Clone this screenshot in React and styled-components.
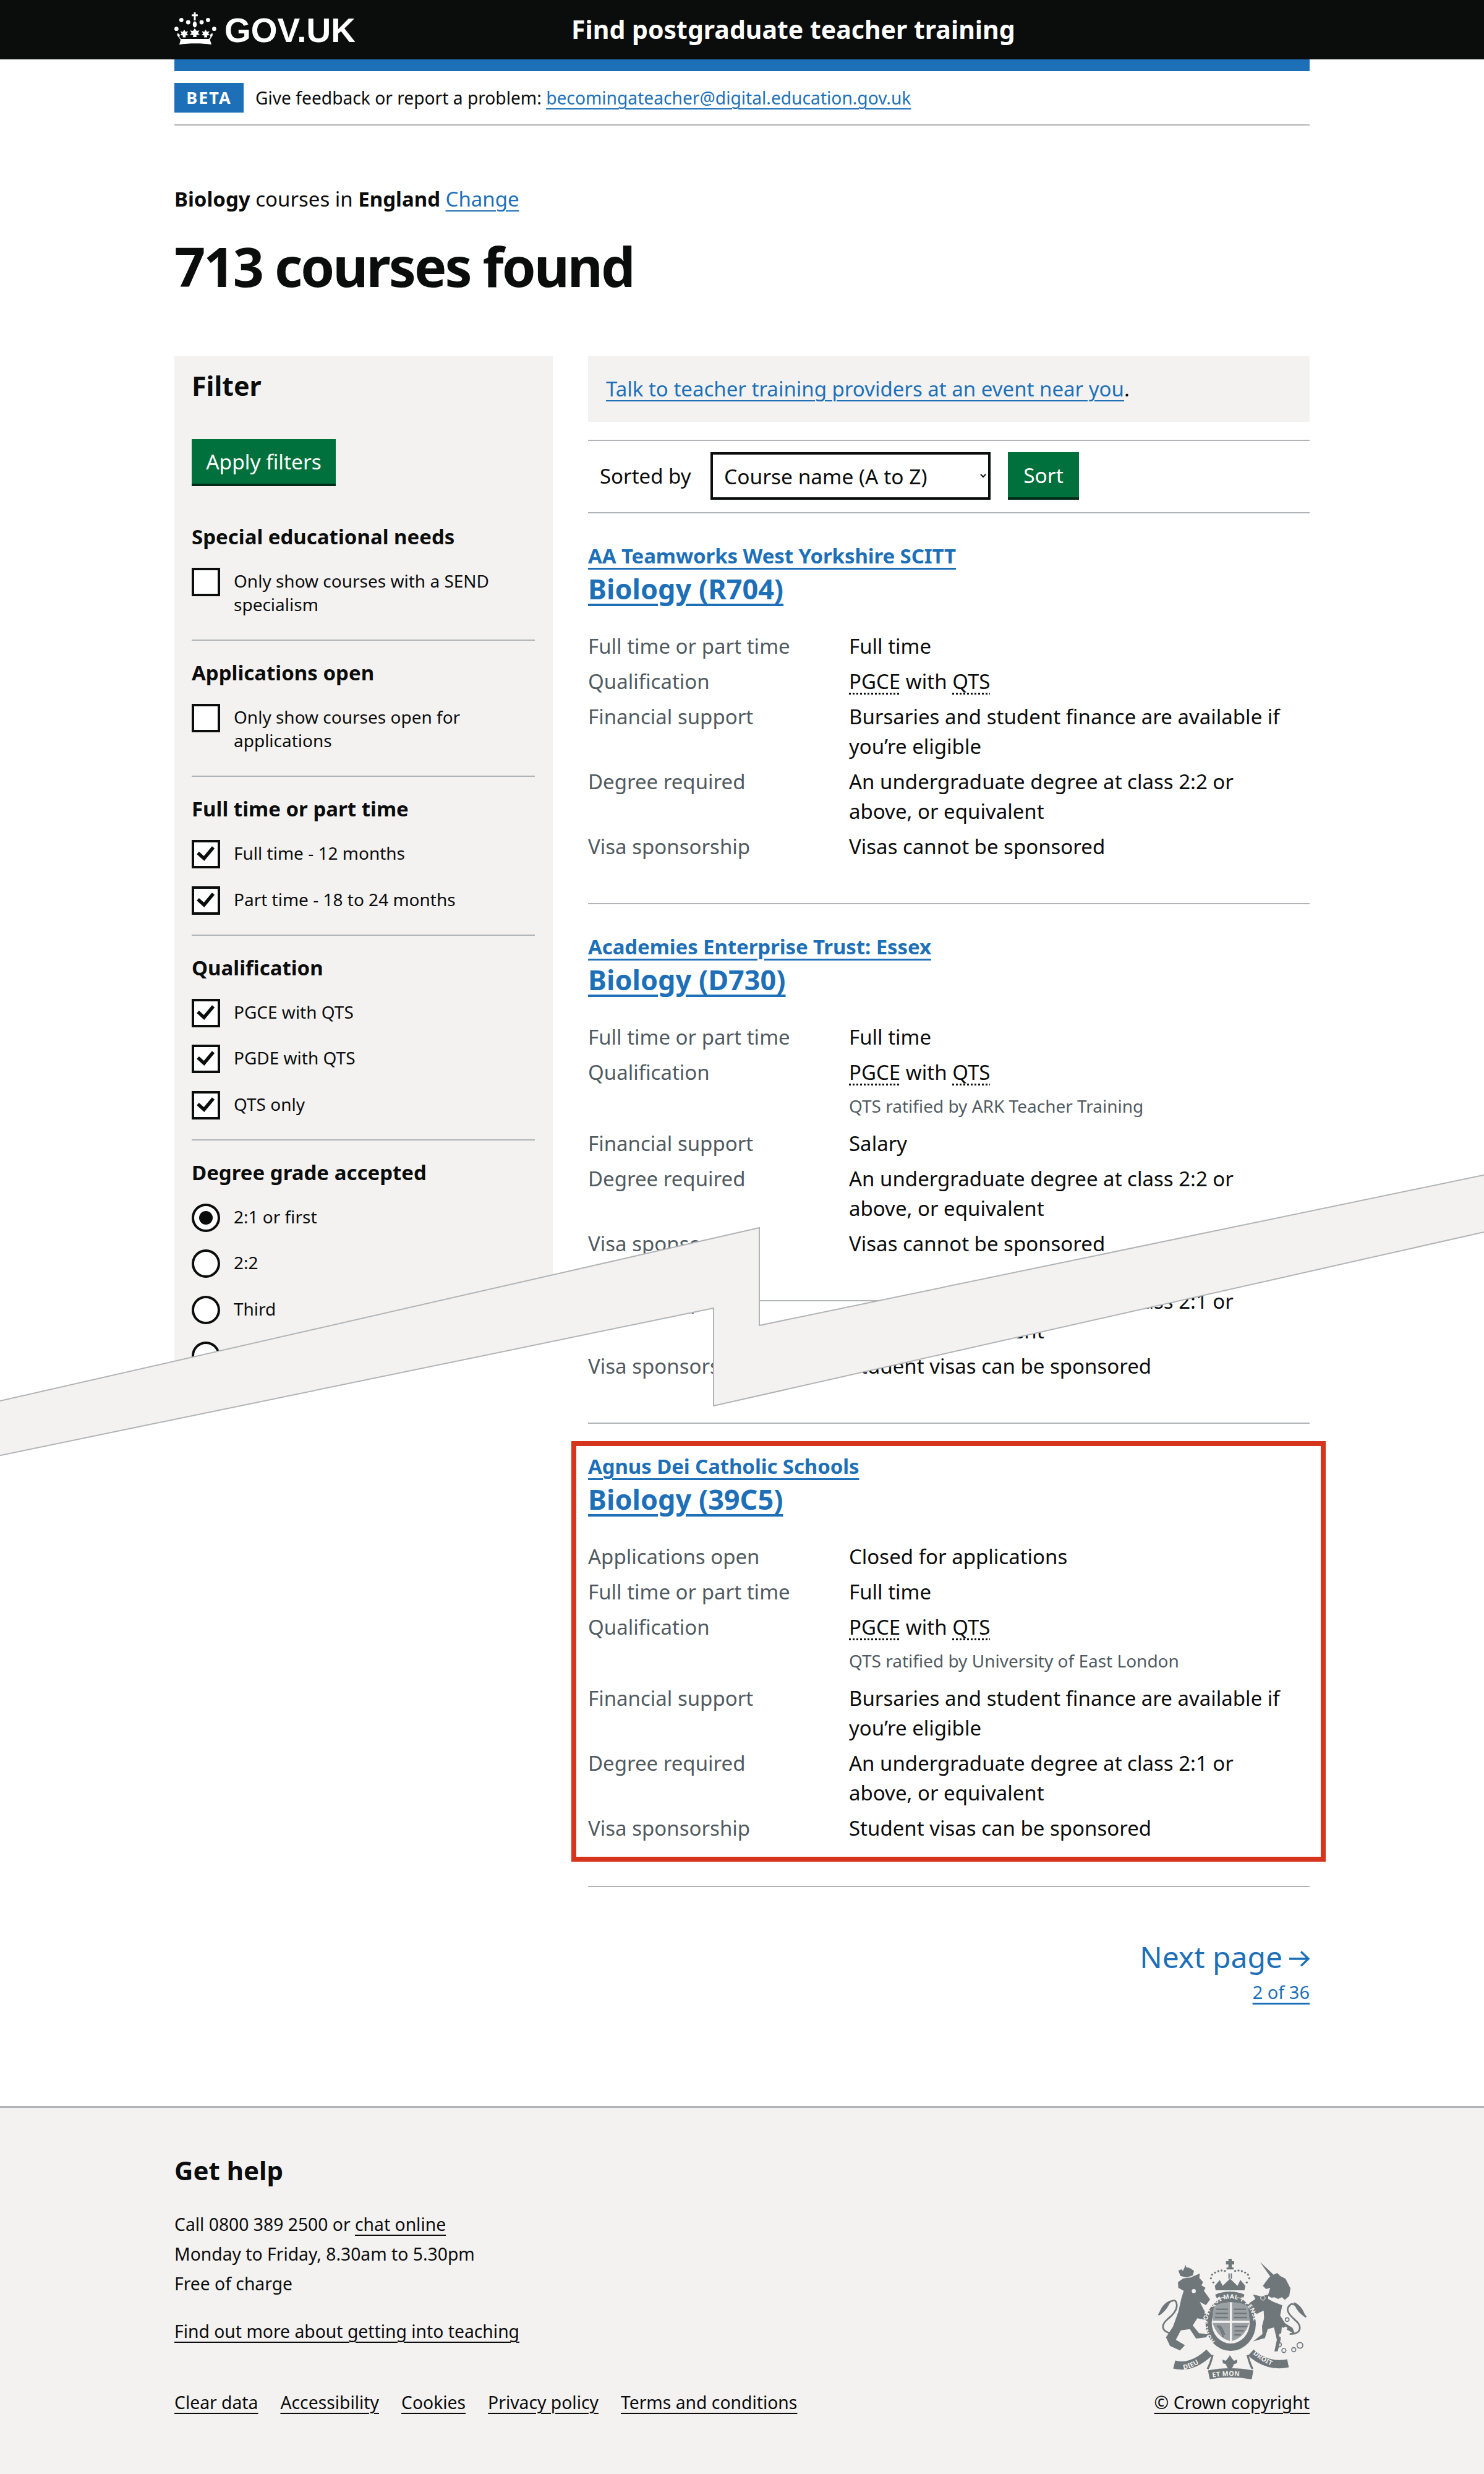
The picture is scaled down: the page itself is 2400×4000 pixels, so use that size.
import React from 'react';
import styled, { createGlobalStyle } from 'styled-components';

const Global = createGlobalStyle`
  * { box-sizing: border-box; }
  html, body { margin: 0; padding: 0; background: #fff; }
  body { font-family: "Noto Sans", Arial, sans-serif; color: #0b0c0c; font-size: 33px; line-height: 48px; }
`;

const Page = styled.div`position: relative; width: 2400px; height: 4000px; overflow: hidden; background: #fff;`;
const TopSheet = styled.div`
  position: relative; z-index: 1; background: #fff;
  clip-path: polygon(0 0, 2400px 0, 2400px 1945px, 1190px 2210px, 1190px 2050px, 0 2310px);
`;
const Width = styled.div`width: 1836px; margin: 0 auto;`;

const HeaderBar = styled.header`background: #0b0c0c; height: 96px;`;
const HeaderInner = styled(Width)`display: flex; align-items: center; height: 96px; padding-bottom: 3px;`;
const LogoLink = styled.a`flex: 0 0 642px; display: flex; align-items: center; gap: 13px; color: #fff;`;
const LogoType = styled.span`font-family: "Liberation Sans", Arial, sans-serif; font-weight: 700; font-size: 55px; line-height: 60px; margin-top: 5px;`;
const ServiceName = styled.a`color: #fff; font-weight: 700; font-size: 41px; line-height: 60px;`;
const BlueBar = styled(Width)`height: 19px; background: #1d70b8;`;

const Phase = styled(Width)`display: flex; align-items: center; gap: 19px; padding: 19px 0; border-bottom: 2px solid #b1b4b6; height: 88px; font-size: 28.2px;`;
const Tag = styled.strong`width: 112px; height: 48px; background: #1d70b8; color: #fff; display: flex; align-items: center; justify-content: center; font-size: 27px; letter-spacing: 2px; font-weight: 700;`;
const Link = styled.a`
  color: ${p => p.$dark ? '#0b0c0c' : '#1d70b8'};
  text-decoration: underline; text-decoration-thickness: 2px; text-underline-offset: 6px;
`;

const Crumb = styled.p`margin: 95px 0 0; font-size: 33px; line-height: 48px;`;
const H1 = styled.h1`margin: 29px 0 91px; font-size: 88px; line-height: 110px; font-weight: 700; letter-spacing: -3px;`;

const Columns = styled.div`display: grid; grid-template-columns: 612px 1167px; column-gap: 57px; align-items: start;`;
const Sidebar = styled.aside`background: #f3f2f1; padding: 18px 29px 0 28px; height: 1720px; overflow: hidden;`;
const FilterTitle = styled.h2`margin: 0 0 56px; font-size: 43px; line-height: 60px; font-weight: 700;`;
const Button = styled.button`
  display: inline-flex; align-items: center; justify-content: center; border: 0; border-radius: 0;
  background: #00703c; color: #fff; box-shadow: 0 4px 0 #002d18; font-family: inherit;
  font-size: 33.5px; line-height: 48px;
  height: ${p => p.$small ? '73px' : '72px'}; padding: 0; margin-bottom: 4px;
  width: ${p => p.$small ? '115px' : '233px'};
`;
const FilterSection = styled.section`
  padding: 30px 0 32px; border-top: ${p => p.$first ? '0' : '2px solid #b1b4b6'};
  margin-top: ${p => p.$first ? '30px' : '0'};
`;
const FilterHead = styled.h3`margin: 0 0 28px; font-size: 33px; line-height: 44px; font-weight: 700;`;
const Options = styled.div`display: flex; flex-direction: column; gap: 28.5px;`;
const Option = styled.label`display: grid; grid-template-columns: 46px 1fr; column-gap: 22px; font-size: 28px; line-height: 38px;`;
const OptionText = styled.span`padding: 2px 0 6px;`;
const CheckBox = styled.span`display: block; width: 46px; height: 46px; border: 4px solid #0b0c0c; background: #fff;`;
const RadioMark = styled.span`
  display: flex; align-items: center; justify-content: center; width: 46px; height: 46px;
  border: 4px solid #0b0c0c; border-radius: 50%; background: #fff;
  &::after { content: ''; width: 22px; height: 22px; border-radius: 50%; background: ${p => p.$on ? '#0b0c0c' : 'transparent'}; }
`;

const Callout = styled.div`height: 106px; padding: 0 29px; background: #f3f2f1; display: flex; align-items: center;`;
const SortBar = styled.form`
  margin-top: 29px; padding: 18px 0 20px 19px; border-top: 2px solid #b1b4b6; border-bottom: 2px solid #b1b4b6;
  display: flex; align-items: flex-start; gap: 28px;
`;
const SortLabel = styled.label`min-width: 151px; line-height: 77px; white-space: nowrap;`;
const SortSelect = styled.select`
  width: 453px; height: 77px; border: 4px solid #0b0c0c; background: #fff; color: #0b0c0c; border-radius: 0;
  font-family: inherit; font-size: 33.5px; padding: 0 0 0 14px;
`;

const Course = styled.article`
  position: relative; padding: 45px 0 ${p => p.$pad || 67}px; border-bottom: 2px solid #b1b4b6;
`;
const Highlight = styled.span`position: absolute; top: 28px; left: -27px; right: -26px; bottom: 39px; border: 8px solid #d4351c; pointer-events: none;`;
const Provider = styled.a`
  display: table; color: #1d70b8; font-weight: 700; font-size: 33px; line-height: 48px; letter-spacing: -0.1px;
  text-decoration: underline; text-decoration-thickness: 2.5px; text-underline-offset: 7px;
`;
const Title = styled.a`
  display: table; color: #1d70b8; font-weight: 700; font-size: 45px; line-height: 57px;
  text-decoration: underline; text-decoration-thickness: 4px; text-underline-offset: 7px;
`;
const Rows = styled.dl`margin: ${p => p.$flush ? 0 : '41px 0 0'}; display: grid; grid-template-columns: 422px 1fr; row-gap: 9px;`;
const Term = styled.dt`color: #505a5f;`;
const Value = styled.dd`margin: 0; padding-right: 30px;`;
const Abbr = styled.abbr`text-decoration: underline dotted #0b0c0c 2.5px; text-underline-offset: 6px;`;
const Note = styled.div`margin: 11px 0 9px; font-size: 28px; line-height: 38px; color: #505a5f;`;

const BottomSheet = styled(Width)`margin-top: -216px;`;
const BottomColumn = styled.div`margin-left: 669px;`;
const Flush = styled.div`padding-bottom: 67px; border-bottom: 2px solid #b1b4b6;`;

const Pager = styled.nav`margin-top: 83px; display: flex; flex-direction: column; align-items: flex-end; gap: 7px;`;
const NextLink = styled.a`color: #1d70b8; font-size: 48px; line-height: 60px; display: flex; align-items: center; gap: 11px;`;
const PageCount = styled(Link)`font-size: 29px; line-height: 40px; text-decoration-thickness: 3px;`;

const Footer = styled.footer`margin-top: 164px; height: 595px; background: #f3f2f1; border-top: 3px solid #b1b4b6; padding-top: 73px;`;
const FooterInner = styled(Width)`display: flex; justify-content: space-between; align-items: flex-end;`;
const FooterHead = styled.h2`margin: 0 0 35px; font-size: 42px; line-height: 56px; font-weight: 700;`;
const FooterText = styled.p`margin: 0; font-size: 28.3px; line-height: 48px;`;
const FooterMore = styled(FooterText)`margin-top: 29px;`;
const FooterLinks = styled.ul`list-style: none; margin: 67px 0 0; padding: 0; display: flex; gap: 36px; font-size: 28.3px; line-height: 48px;`;
const CopyColumn = styled.div`display: flex; flex-direction: column; align-items: flex-end; font-size: 28.5px; line-height: 48px;`;
const CrestWrap = styled.div`margin: 0 5px 12px 0; line-height: 0;`;

const Crown = () => (
  <svg width="68" height="52" viewBox="0 0 68 52" fill="#fff" style={{ marginBottom: 2 }}>
    <path d="M31.5 0h3v3.2h3.4v3h-3.4V13h-3V6.2h-3.4v-3h3.4z" />
    <ellipse cx="33" cy="19.5" rx="3.2" ry="5" />
    <circle cx="11.3" cy="12.3" r="3.4" /><circle cx="22.3" cy="16" r="3.4" />
    <circle cx="44" cy="16" r="3.4" /><circle cx="54.4" cy="12.3" r="3.4" />
    <circle cx="3.4" cy="26.7" r="3.4" /><circle cx="64.4" cy="26.7" r="3.4" />
    <path d="M33 26l3 4 4.5-.8-2.5 4.4 3 2.2-5.5 1 .5 3.2h-6l.5-3.2-5.5-1 3-2.2-2.5-4.4 4.5.8z" />
    <path d="M16 28l2.2 3.6 3.8-1-2 4 2.6 2-4.6 1 .4 3h-5l.4-3-4.6-1 2.6-2-2-4 3.8 1z" />
    <path d="M50.5 28l-2.2 3.6-3.8-1 2 4-2.6 2 4.6 1-.4 3h5l-.4-3 4.6-1-2.6-2 2-4-3.8 1z" />
    <path d="M5 33l4 3.5L8 40l3 3h44.5l3-3-1-3.5 4-3.5.4 4-4.4 7L60 52c-17-2.4-35-2.4-52 0l2-7.4L4.6 37z" />
  </svg>
);

const Check = () => (
  <svg width="38" height="38" viewBox="0 0 38 38" style={{ display: 'block' }}>
    <polyline points="6,17 16,26 31,8" fill="none" stroke="#0b0c0c" strokeWidth="5.5" />
  </svg>
);

const Arrow = () => (
  <svg width="33" height="26" viewBox="0 0 33 26" fill="none" stroke="#1d70b8" strokeWidth="3.4" style={{ marginTop: 6 }}>
    <path d="M0 13h30M19 1.5 31 13 19 24.5" />
  </svg>
);

const ink = '#6f777b';
const bg = '#f3f2f1';
const Crest = () => (
  <svg width="240" height="197" viewBox="222 152 720 591" role="img" aria-label="Royal coat of arms">
    <defs>
      <path id="garter" d="M500 556A112 118 0 1 1 650 552" />
      <path id="scrollL" d="M346 692Q404 684 462 628" />
      <path id="scrollM" d="M486 730Q570 716 664 730" />
      <path id="scrollR" d="M682 616Q740 668 812 688" />
    </defs>
    <g fill={ink}>
      <path d="M563 155h16v12h12v16h-12v14h9v10h-34v-10h9v-14h-12v-16h12z" />
      <rect x="563" y="226" width="6" height="26" /><rect x="574" y="226" width="6" height="26" />
      {[[484,232],[478,250],[490,270],[498,222],[514,215],[530,212],[546,214],[596,214],[612,212],[628,215],[644,222],[658,232],[664,250],[652,270]].map(([x, y]) => (
        <circle key={x + '' + y} cx={x} cy={y} r="5" />
      ))}
      <path d="M497 286l24-28 14 28 36-34 36 34 14-28 24 28-4 22h-140z" />
      <path d="M500 328q71-28 140 0q0 14-10 18q-60-14-120 0q-10-4-10-18z" />
      <path d="M320 212l16-6 6 8 8-16 4-14 6 14 10 0 12 6 14 10-6 22-30 10-30-8z" />
      <path d="M318 268l26-18 36-4 44-20-2 22 18 20-8 16 20 12-8 14 30 42-20 28-30-16 50 96-28-10-34-6-22 34 30 38 48 6-12 14-50 6-30-46-44 6-24 46 44 26-24 26-48-22-20-42 34-52 26-72 14-62 12-40-26-14-2-26 14-6z" />
      <path d="M300 520C236 512 232 478 268 448 306 418 322 390 308 362 296 346 262 370 224 428" fill="none" stroke={ink} strokeWidth="8" />
      <path d="M224 432c6-34 26-64 60-76-8 24-26 56-60 76z" />
      <path d="M716 170l66 62-14 12z" />
      <path d="M730 286l30-40 22-14 18-8 14 14 26 14 24 46-6 38-30 26-14 68 24 38 36 22 14 34-28-18-38-20-6 62-14 56-16 0 12-56-14-60-30 8-14 44-58 16 46-36-2-38 10-38-2-38-36 18-24-26-30-14 50-34-12-22 40 10 34-10 10-32-20 6z" />
      <path d="M860 520C920 520 922 480 884 450 846 416 840 396 866 376 884 366 906 400 940 438" fill="none" stroke={ink} strokeWidth="8" />
      <path d="M938 440c-8-34-30-66-58-74 6 28 28 58 58 74z" />
      <ellipse cx="574" cy="470" rx="122" ry="132" />
    </g>
    <g fill="none" stroke={bg} strokeWidth="3" strokeLinecap="round">
      <circle cx="730" cy="345" r="11" /><circle cx="718" cy="426" r="10" />
    </g>
    <g fill="none" stroke={ink} strokeWidth="5">
      <circle cx="810" cy="572" r="10" /><circle cx="832" cy="600" r="10" /><circle cx="880" cy="596" r="10" /><circle cx="910" cy="575" r="14" /><circle cx="848" cy="450" r="9" />
    </g>
    <g fill={bg}>
      <circle cx="818" cy="526" r="9" /><circle cx="840" cy="492" r="8" />
      <path d="M756 336l16 8 14-2 18 8 18-8 24 20-8 24-56-22-26-14z" />
      <ellipse cx="574" cy="466" rx="92" ry="100" />
      <circle cx="395" cy="312" r="10" />
    </g>
    <g fill="#9aa0a3">
      <path d="M494 384q34-18 76-18v90h-84q-2-40 8-72z" />
      <path d="M580 366q44 0 76 18 10 32 8 72h-84z" />
      <path d="M486 466h84v88q-62-18-84-88z" />
      <path d="M580 466h84q-22 70-84 88z" />
    </g>
    <g stroke={ink} strokeWidth="7" fill="none">
      <path d="M504 400h56M500 420h60M498 440h62M590 400h58M590 420h62M590 440h64M592 484h60M592 504h46M592 524h30" />
      <path d="M508 478q22 20 30 58M520 478q16 18 24 46" />
    </g>
    <text fontFamily="'Noto Sans', sans-serif" fontWeight="700" fontSize="30" fill={bg} letterSpacing="1">
      <textPath href="#garter">HONI SOIT QUI MAL Y PENSE</textPath>
    </text>
    <g fill="none" strokeLinecap="butt">
      <path d="M300 668Q384 690 470 610" stroke={bg} strokeWidth="50" />
      <path d="M672 610Q752 682 852 662" stroke={bg} strokeWidth="50" />
      <path d="M300 668Q384 690 470 610" stroke={ink} strokeWidth="40" />
      <path d="M672 610Q752 682 852 662" stroke={ink} strokeWidth="40" />
      <path d="M486 622Q476 664 462 690M656 622Q666 664 680 690" stroke={ink} strokeWidth="10" />
      <path d="M468 718Q570 698 680 718" stroke={ink} strokeWidth="44" />
    </g>
    <path fill={ink} d="M570 622l10 16 10 12 16-6-2 18-14 4-8 18-12 8-12-8-8-18-14-4-2-18 16 6 10-12z" />
    <g fontFamily="'Noto Sans', sans-serif" fontWeight="700" fontSize="32" fill={bg} letterSpacing="1">
      <text><textPath href="#scrollL">DIEU</textPath></text>
      <text><textPath href="#scrollM">ET MON</textPath></text>
      <text><textPath href="#scrollR">DROIT</textPath></text>
    </g>
  </svg>
);

const Band = styled.svg`position: absolute; z-index: 2; left: 0; top: 1880px; display: block;`;
const Tear = () => (
  <Band width="2400" height="500" viewBox="0 1880 2400 500">
    <polygon
      points="-4,2266 1228,1985 1228,2143 2404,1899 2404,1991 1154,2273 1154,2115 -4,2354"
      fill="#f3f2f1" stroke="#b1b4b6" strokeWidth="2"
    />
  </Band>
);

const Tick = ({ label, on }) => (
  <Option><CheckBox>{on && <Check />}</CheckBox><OptionText>{label}</OptionText></Option>
);
const Radio = ({ label, on }) => (
  <Option><RadioMark $on={on} /><OptionText>{label}</OptionText></Option>
);
const Qual = ({ note }) => (
  <>
    <div><Abbr>PGCE</Abbr> with <Abbr>QTS</Abbr></div>
    {note && <Note>{note}</Note>}
  </>
);
const bursary = 'Bursaries and student finance are available if you’re eligible';
const degree = c => `An undergraduate degree at class ${c} or above, or equivalent`;

const Row = ({ term, children }) => (<><Term>{term}</Term><Value>{children}</Value></>);

export default function App() {
  return (
    <Page>
      <Global />
      <TopSheet>
        <HeaderBar>
          <HeaderInner>
            <LogoLink><Crown /><LogoType>GOV.UK</LogoType></LogoLink>
            <ServiceName>Find postgraduate teacher training</ServiceName>
          </HeaderInner>
        </HeaderBar>
        <BlueBar />
        <Phase>
          <Tag>BETA</Tag>
          <span>Give feedback or report a problem: <Link>becomingateacher@digital.education.gov.uk</Link></span>
        </Phase>
        <Width>
          <Crumb><b>Biology</b> courses in <b>England</b> <Link>Change</Link></Crumb>
          <H1>713 courses found</H1>
          <Columns>
            <Sidebar>
              <FilterTitle>Filter</FilterTitle>
              <Button>Apply filters</Button>
              <FilterSection $first>
                <FilterHead>Special educational needs</FilterHead>
                <Options><Tick label="Only show courses with a SEND specialism" /></Options>
              </FilterSection>
              <FilterSection>
                <FilterHead>Applications open</FilterHead>
                <Options><Tick label="Only show courses open for applications" /></Options>
              </FilterSection>
              <FilterSection>
                <FilterHead>Full time or part time</FilterHead>
                <Options>
                  <Tick on label="Full time - 12 months" />
                  <Tick on label="Part time - 18 to 24 months" />
                </Options>
              </FilterSection>
              <FilterSection>
                <FilterHead>Qualification</FilterHead>
                <Options>
                  <Tick on label="PGCE with QTS" />
                  <Tick on label="PGDE with QTS" />
                  <Tick on label="QTS only" />
                </Options>
              </FilterSection>
              <FilterSection>
                <FilterHead>Degree grade accepted</FilterHead>
                <Options>
                  <Radio on label="2:1 or first" />
                  <Radio label="2:2" />
                  <Radio label="Third" />
                  <Radio label="Pass" />
                </Options>
              </FilterSection>
            </Sidebar>
            <main>
              <Callout><span><Link>Talk to teacher training providers at an event near you</Link>.</span></Callout>
              <SortBar>
                <SortLabel>Sorted by</SortLabel>
                <SortSelect defaultValue="a"><option value="a">Course name (A to Z)</option></SortSelect>
                <Button $small>Sort</Button>
              </SortBar>
              <Course>
                <Provider>AA Teamworks West Yorkshire SCITT</Provider>
                <Title>Biology (R704)</Title>
                <Rows>
                  <Row term="Full time or part time">Full time</Row>
                  <Row term="Qualification"><Qual /></Row>
                  <Row term="Financial support">{bursary}</Row>
                  <Row term="Degree required">{degree('2:2')}</Row>
                  <Row term="Visa sponsorship">Visas cannot be sponsored</Row>
                </Rows>
              </Course>
              <Course>
                <Provider>Academies Enterprise Trust: Essex</Provider>
                <Title>Biology (D730)</Title>
                <Rows>
                  <Row term="Full time or part time">Full time</Row>
                  <Row term="Qualification"><Qual note="QTS ratified by ARK Teacher Training" /></Row>
                  <Row term="Financial support">Salary</Row>
                  <Row term="Degree required">{degree('2:2')}</Row>
                  <Row term="Visa sponsorship">Visas cannot be sponsored</Row>
                </Rows>
              </Course>
            </main>
          </Columns>
        </Width>
      </TopSheet>
      <BottomSheet>
        <BottomColumn>
          <Flush>
            <Rows $flush>
              <Row term="Degree required">{degree('2:1')}</Row>
              <Row term="Visa sponsorship">Student visas can be sponsored</Row>
            </Rows>
          </Flush>
          <Course $pad={69}>
            <Highlight />
            <Provider>Agnus Dei Catholic Schools</Provider>
            <Title>Biology (39C5)</Title>
            <Rows>
              <Row term="Applications open">Closed for applications</Row>
              <Row term="Full time or part time">Full time</Row>
              <Row term="Qualification"><Qual note="QTS ratified by University of East London" /></Row>
              <Row term="Financial support">{bursary}</Row>
              <Row term="Degree required">{degree('2:1')}</Row>
              <Row term="Visa sponsorship">Student visas can be sponsored</Row>
            </Rows>
          </Course>
          <Pager>
            <NextLink>Next page <Arrow /></NextLink>
            <PageCount>2 of 36</PageCount>
          </Pager>
        </BottomColumn>
      </BottomSheet>
      <Footer>
        <FooterInner>
          <div>
            <FooterHead>Get help</FooterHead>
            <FooterText>Call 0800 389 2500 or <Link $dark>chat online</Link></FooterText>
            <FooterText>Monday to Friday, 8.30am to 5.30pm</FooterText>
            <FooterText>Free of charge</FooterText>
            <FooterMore><Link $dark>Find out more about getting into teaching</Link></FooterMore>
            <FooterLinks>
              {['Clear data', 'Accessibility', 'Cookies', 'Privacy policy', 'Terms and conditions'].map(t => (
                <li key={t}><Link $dark>{t}</Link></li>
              ))}
            </FooterLinks>
          </div>
          <CopyColumn>
            <CrestWrap><Crest /></CrestWrap>
            <Link $dark>© Crown copyright</Link>
          </CopyColumn>
        </FooterInner>
      </Footer>
      <Tear />
    </Page>
  );
}
